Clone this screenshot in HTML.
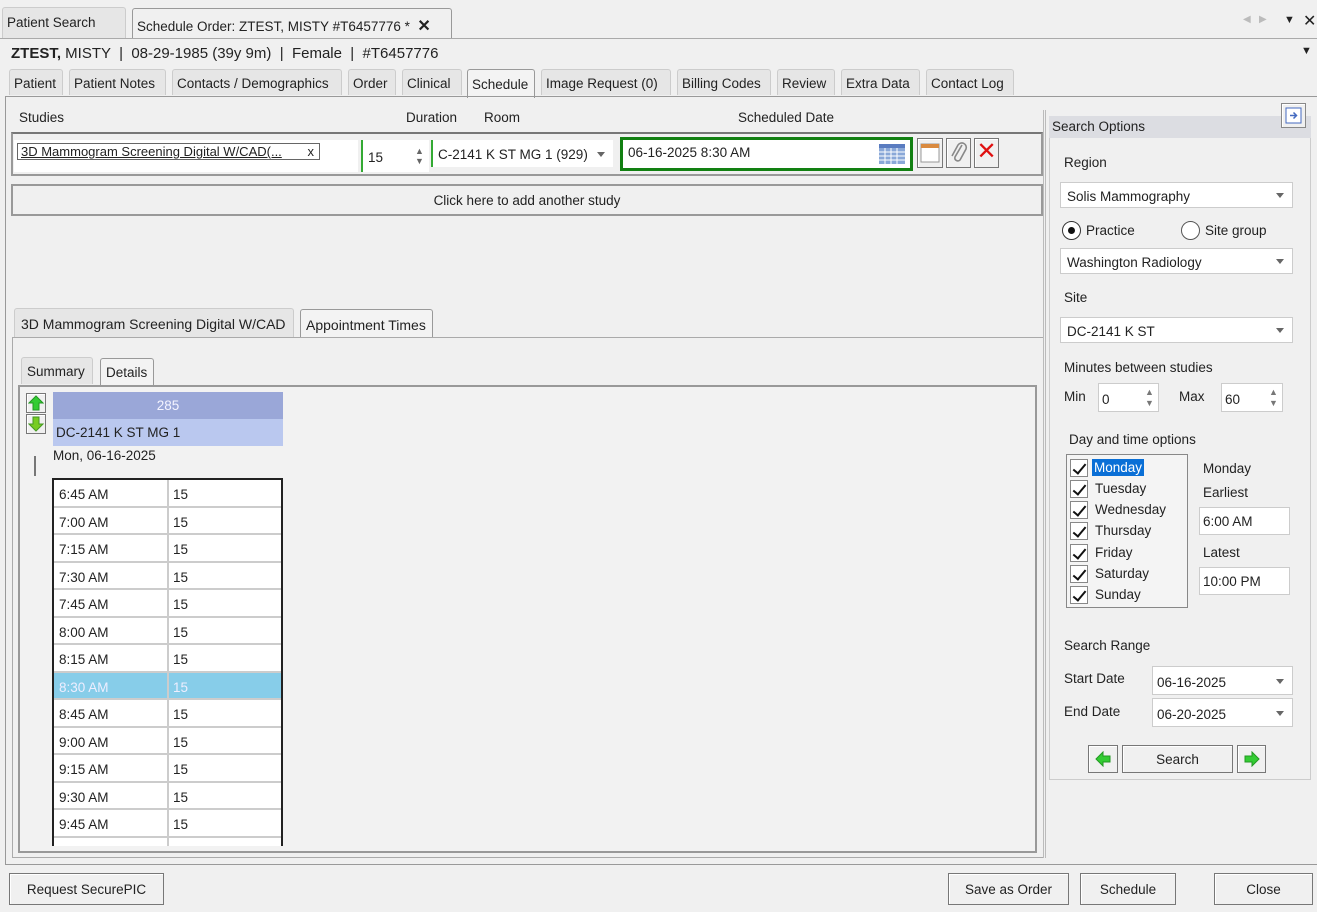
<!DOCTYPE html>
<html><head><meta charset="utf-8"><style>
*{box-sizing:border-box;margin:0;padding:0}
body{width:1317px;height:912px;background:#f0f0f0;font-family:"Liberation Sans",Arial,sans-serif;font-size:13.5px;color:#222;position:relative;overflow:hidden}
.a{position:absolute}
.tab{position:absolute;height:26px;border:1px solid #ccc;border-bottom:none;background:#e6e6e6;border-radius:3px 3px 0 0;padding:6px 4px 0;white-space:nowrap;color:#222}
.sel{background:#f3f3f3;border-color:#999}
.box{position:absolute;background:#fff;border:1px solid #ccc}
.dd:after{content:"";position:absolute;right:8px;top:50%;margin-top:-2px;border:4px solid transparent;border-top:5px solid #666}
.btn{position:absolute;border:1px solid #777;background:#f0f0f0;text-align:center;box-shadow:inset 1px 1px #fff}
.row{position:absolute;left:54px;width:227px;height:27.5px;border-bottom:2px solid #ccc;background:#fff}
.row span{position:absolute;top:7px}
.cb{position:absolute;left:1070px;width:18px;height:18px;border:1px solid #888;background:#fff}
.cb:after{content:"";position:absolute;left:5px;top:1px;width:5px;height:11px;border:solid #111;border-width:0 2px 2px 0;transform:rotate(40deg)}
</style></head><body>
<div class="tab" style="left:2px;top:7px;width:124px;height:31px;padding-top:7px">Patient Search</div>
<div class="tab sel" style="left:132px;top:8px;width:320px;height:31px;padding-top:7px;background:#f0f0f0">Schedule Order: ZTEST, MISTY #T6457776 * &nbsp;<b style="font-size:16px">✕</b></div>
<div class="a" style="left:0;top:38px;width:1317px;border-top:1px solid #aaa"></div>
<div class="a" style="left:1243px;top:14px;color:#bbb;font-size:10px">◀ &nbsp; ▶</div>
<div class="a" style="left:1284px;top:14px;font-size:11px">▼</div>
<div class="a" style="left:1303px;top:11px;font-size:16px">✕</div>
<div class="a" style="left:1301px;top:45px;font-size:11px">▼</div>
<div class="a" style="left:11px;top:45px;font-size:15px"><b>ZTEST,</b> MISTY &nbsp;| &nbsp;08-29-1985 (39y 9m) &nbsp;| &nbsp;Female &nbsp;| &nbsp;#T6457776</div>
<div class="tab" style="left:9px;top:69px;width:54px">Patient</div>
<div class="tab" style="left:69px;top:69px;width:97px">Patient Notes</div>
<div class="tab" style="left:172px;top:69px;width:170px">Contacts / Demographics</div>
<div class="tab" style="left:348px;top:69px;width:48px">Order</div>
<div class="tab" style="left:402px;top:69px;width:60px">Clinical</div>
<div class="tab sel" style="left:467px;top:69px;width:68px;height:29px;padding-top:7px">Schedule</div>
<div class="tab" style="left:541px;top:69px;width:130px">Image Request (0)</div>
<div class="tab" style="left:677px;top:69px;width:94px">Billing Codes</div>
<div class="tab" style="left:777px;top:69px;width:58px">Review</div>
<div class="tab" style="left:841px;top:69px;width:79px">Extra Data</div>
<div class="tab" style="left:926px;top:69px;width:88px">Contact Log</div>
<div class="a" style="left:5px;top:96px;width:1312px;height:769px;border:1px solid #999;border-right:none"></div>
<div class="a" style="left:19px;top:110px">Studies</div>
<div class="a" style="left:406px;top:110px">Duration</div>
<div class="a" style="left:484px;top:110px">Room</div>
<div class="a" style="left:738px;top:110px">Scheduled Date</div>
<div class="a" style="left:11px;top:132px;width:1032px;height:44px;border:2px solid #999;border-top-color:#777"></div>
<div class="box" style="left:14px;top:140px;width:344px;height:32px;border:none"></div>
<div class="a" style="left:17px;top:143px;width:303px;height:17px;border:1px solid #666;padding-left:3px;font-size:13px;text-decoration:underline;background:#fff">3D Mammogram Screening Digital W/CAD(...<span style="position:absolute;right:5px;text-decoration:none">x</span></div>
<div class="box" style="left:361px;top:140px;width:68px;height:32px;border:none;border-left:2px solid #3a3"><span class="a" style="left:5px;top:10px">15</span><span class="a" style="left:52px;top:6px;font-size:9px;color:#666;line-height:10px">▲<br>▼</span></div>
<div class="box dd" style="left:431px;top:140px;width:182px;height:27px;border:none;border-left:2px solid #3a3;padding:7px 5px">C-2141 K ST MG 1 (929)</div>
<div class="a" style="left:620px;top:137px;width:293px;height:34px;border:3px solid #128012;background:#fff;padding:5px 5px">06-16-2025 8:30 AM
<svg class="a" style="right:4px;top:2px" width="28" height="24"><rect x="1" y="2" width="26" height="20" fill="#8aa8d8"/><rect x="1" y="2" width="26" height="4" fill="#5a7cc0"/><g stroke="#fff" stroke-width="1"><path d="M1 10H27M1 14H27M1 18H27M7 6V22M13 6V22M19 6V22"/></g></svg></div>
<div class="btn" style="left:917px;top:138px;width:26px;height:30px"><svg width="20" height="22" style="margin-top:3px"><rect x="1" y="2" width="18" height="18" fill="#fff" stroke="#999"/><rect x="1" y="2" width="18" height="4" fill="#d98a40"/></svg></div>
<div class="btn" style="left:946px;top:138px;width:25px;height:30px"><svg width="20" height="26" style="margin-top:1px"><path d="M13 5L6 17a3 3 0 0 0 5 3L17 9a4.5 4.5 0 0 0-8-4L3 16" fill="none" stroke="#888" stroke-width="1.6"/></svg></div>
<div class="btn" style="left:974px;top:138px;width:25px;height:30px;color:#e01010;font-size:24px;line-height:26px">✕</div>
<div class="a" style="left:11px;top:184px;width:1032px;height:32px;border:2px solid #999;text-align:center;padding-top:7px">Click here to add another study</div>
<div class="tab" style="left:14px;top:308px;width:280px;height:29px;padding:7px 6px;font-size:14px">3D Mammogram Screening Digital W/CAD</div>
<div class="tab sel" style="left:300px;top:309px;width:133px;height:29px;padding:7px 5px;font-size:14px">Appointment Times</div>
<div class="a" style="left:12px;top:337px;width:1032px;height:521px;border:1px solid #aaa"></div>
<div class="tab" style="left:21px;top:357px;width:72px;height:27px;padding:6px 5px">Summary</div>
<div class="tab sel" style="left:100px;top:358px;width:54px;height:27px;padding:6px 5px">Details</div>
<div class="a" style="left:18px;top:385px;width:1019px;height:468px;border:2px solid #999;background:#f2f2f2"></div>
<div class="btn" style="left:26px;top:393px;width:20px;height:20px"><svg width="16" height="16" style="margin-top:1px"><path d="M8 1L15 8H11V15H5V8H1Z" fill="#3c3" stroke="#292" stroke-width="1"/></svg></div>
<div class="btn" style="left:26px;top:414px;width:20px;height:20px"><svg width="16" height="16" style="margin-top:1px"><path d="M8 15L15 8H11V1H5V8H1Z" fill="#7c2" stroke="#492" stroke-width="1"/></svg></div>
<div class="a" style="left:34px;top:456px;width:2px;height:20px;background:#777"></div>
<div class="a" style="left:53px;top:392px;width:230px;height:27px;background:#9aa7d8;color:#f4f4ff;text-align:center;padding-top:6px">285</div>
<div class="a" style="left:53px;top:419px;width:230px;height:27px;background:#bac8ef;padding:6px 3px">DC-2141 K ST MG 1</div>
<div class="a" style="left:53px;top:448px">Mon, 06-16-2025</div>
<div class="a" style="left:52px;top:478px;width:231px;height:368px;border:2px solid #222;border-bottom:none;background:#fff;overflow:hidden"></div>
<div class="a" style="left:54px;top:480px;width:227px;height:366px;overflow:hidden">
<div style="position:relative;left:-54px">
<div class="row" style="top:0"><span style="left:5px">6:45 AM</span><span style="left:119px">15</span></div>
<div class="row" style="top:27.5px"><span style="left:5px">7:00 AM</span><span style="left:119px">15</span></div>
<div class="row" style="top:55px"><span style="left:5px">7:15 AM</span><span style="left:119px">15</span></div>
<div class="row" style="top:82.5px"><span style="left:5px">7:30 AM</span><span style="left:119px">15</span></div>
<div class="row" style="top:110px"><span style="left:5px">7:45 AM</span><span style="left:119px">15</span></div>
<div class="row" style="top:137.5px"><span style="left:5px">8:00 AM</span><span style="left:119px">15</span></div>
<div class="row" style="top:165px"><span style="left:5px">8:15 AM</span><span style="left:119px">15</span></div>
<div class="row" style="top:192.5px;background:#87cde9;color:#eef"><span style="left:5px">8:30 AM</span><span style="left:119px">15</span></div>
<div class="row" style="top:220px"><span style="left:5px">8:45 AM</span><span style="left:119px">15</span></div>
<div class="row" style="top:247.5px"><span style="left:5px">9:00 AM</span><span style="left:119px">15</span></div>
<div class="row" style="top:275px"><span style="left:5px">9:15 AM</span><span style="left:119px">15</span></div>
<div class="row" style="top:302.5px"><span style="left:5px">9:30 AM</span><span style="left:119px">15</span></div>
<div class="row" style="top:330px"><span style="left:5px">9:45 AM</span><span style="left:119px">15</span></div>
<div class="row" style="top:357.5px"></div>
</div></div>
<div class="a" style="left:167px;top:480px;width:2px;height:366px;background:#ccc"></div>
<div class="a" style="left:1043px;top:110px;width:3px;height:748px;border-left:1px solid #bbb;border-right:1px solid #bbb"></div>
<div class="a" style="left:1049px;top:116px;width:262px;height:22px;background:#dcdde2;padding:3px 3px">Search Options</div>
<div class="btn" style="left:1281px;top:103px;width:25px;height:25px;border-color:#888"><svg width="17" height="17" style="margin-top:3px"><rect x="1" y="1" width="15" height="15" fill="#fff" stroke="#446ac0"/><path d="M5 8.5H11M8.5 5.5L11.5 8.5L8.5 11.5" stroke="#446ac0" fill="none" stroke-width="1.5"/></svg></div>
<div class="a" style="left:1049px;top:138px;width:262px;height:642px;border:1px solid #ccc;border-top:none"></div>
<div class="a" style="left:1064px;top:155px">Region</div>
<div class="box dd" style="left:1060px;top:182px;width:233px;height:26px;padding:6px 6px">Solis Mammography</div>
<div class="a" style="left:1062px;top:221px;width:19px;height:19px;border:1px solid #333;border-radius:50%;background:#fff"><div class="a" style="left:5px;top:5px;width:7px;height:7px;border-radius:50%;background:#111"></div></div>
<div class="a" style="left:1086px;top:223px">Practice</div>
<div class="a" style="left:1181px;top:221px;width:19px;height:19px;border:1px solid #555;border-radius:50%;background:#fff"></div>
<div class="a" style="left:1205px;top:223px">Site group</div>
<div class="box dd" style="left:1060px;top:248px;width:233px;height:26px;padding:6px 6px">Washington Radiology</div>
<div class="a" style="left:1064px;top:290px">Site</div>
<div class="box dd" style="left:1060px;top:317px;width:233px;height:26px;padding:6px 6px">DC-2141 K ST</div>
<div class="a" style="left:1064px;top:360px">Minutes between studies</div>
<div class="a" style="left:1064px;top:389px">Min</div>
<div class="box" style="left:1098px;top:383px;width:61px;height:29px;padding:8px 3px">0<span class="a" style="left:46px;top:3px;font-size:9px;color:#777;line-height:11px">▲<br>▼</span></div>
<div class="a" style="left:1179px;top:389px">Max</div>
<div class="box" style="left:1221px;top:383px;width:62px;height:29px;padding:8px 3px">60<span class="a" style="left:47px;top:3px;font-size:9px;color:#777;line-height:11px">▲<br>▼</span></div>
<div class="a" style="left:1069px;top:432px">Day and time options</div>
<div class="a" style="left:1066px;top:454px;width:122px;height:154px;border:1px solid #888;background:#f4f4f4"></div>
<div class="cb" style="top:459px"></div><div class="a" style="left:1092px;top:459px;background:#0a6fd6;color:#fff;padding:1px 2px">Monday</div>
<div class="cb" style="top:480px"></div><div class="a" style="left:1095px;top:481px">Tuesday</div>
<div class="cb" style="top:501px"></div><div class="a" style="left:1095px;top:502px">Wednesday</div>
<div class="cb" style="top:522px"></div><div class="a" style="left:1095px;top:523px">Thursday</div>
<div class="cb" style="top:544px"></div><div class="a" style="left:1095px;top:545px">Friday</div>
<div class="cb" style="top:565px"></div><div class="a" style="left:1095px;top:566px">Saturday</div>
<div class="cb" style="top:586px"></div><div class="a" style="left:1095px;top:587px">Sunday</div>
<div class="a" style="left:1203px;top:461px">Monday</div>
<div class="a" style="left:1203px;top:485px">Earliest</div>
<div class="box" style="left:1199px;top:507px;width:91px;height:28px;padding:6px 3px">6:00 AM</div>
<div class="a" style="left:1203px;top:545px">Latest</div>
<div class="box" style="left:1199px;top:567px;width:91px;height:28px;padding:6px 3px">10:00 PM</div>
<div class="a" style="left:1064px;top:638px">Search Range</div>
<div class="a" style="left:1064px;top:671px">Start Date</div>
<div class="box dd" style="left:1152px;top:666px;width:141px;height:29px;padding:8px 4px">06-16-2025</div>
<div class="a" style="left:1064px;top:704px">End Date</div>
<div class="box dd" style="left:1152px;top:698px;width:141px;height:29px;padding:8px 4px">06-20-2025</div>
<div class="btn" style="left:1088px;top:745px;width:30px;height:28px"><svg width="16" height="16" style="margin-top:5px"><path d="M1 8L8 1V5H15V11H8V15Z" fill="#3c3" stroke="#292"/></svg></div>
<div class="btn" style="left:1122px;top:745px;width:111px;height:28px;padding-top:6px">Search</div>
<div class="btn" style="left:1237px;top:745px;width:29px;height:28px"><svg width="16" height="16" style="margin-top:5px"><path d="M15 8L8 1V5H1V11H8V15Z" fill="#3c3" stroke="#292"/></svg></div>
<div class="btn" style="left:9px;top:873px;width:155px;height:32px;padding-top:8px">Request SecurePIC</div>
<div class="btn" style="left:948px;top:873px;width:121px;height:32px;padding-top:8px">Save as Order</div>
<div class="btn" style="left:1080px;top:873px;width:96px;height:32px;padding-top:8px">Schedule</div>
<div class="btn" style="left:1214px;top:873px;width:99px;height:32px;padding-top:8px">Close</div>
</body></html>
